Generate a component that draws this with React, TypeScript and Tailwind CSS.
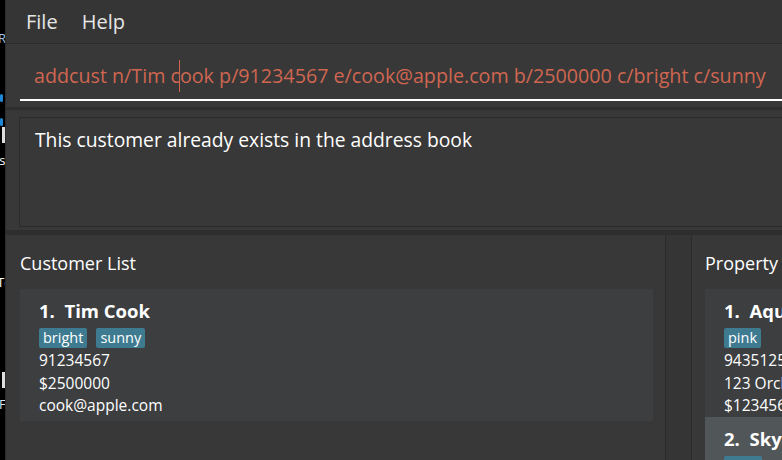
const font = { fontFamily: '"Open Sans", "Noto Sans", sans-serif' }

const Tag = ({ label }: { label: string }) => (
  <span className="rounded-[2px] bg-[#3e7b91] px-[4px] text-[14.5px] leading-[20px] text-white">{label}</span>
)

export default function App() {
  return (
    <div className="relative flex h-[460px] w-[782px] overflow-hidden bg-black" style={font}>
      {/* bit of another window peeking out on the left */}
      <div className="relative w-[5px] shrink-0 overflow-hidden bg-black text-[13px] leading-[16px] text-white">
        <span className="absolute left-[-2px] top-[30px] text-[#9ec3e6]">R</span>
        <span className="absolute left-[0px] top-[94px] h-[8px] w-[3px] rounded-full bg-[#1e88d8]" />
        <span className="absolute left-[0px] top-[118px] h-[8px] w-[3px] rounded-full bg-[#1e88d8]" />
        <span className="absolute left-[2px] top-[127px] h-[16px] w-[3px] bg-[#ddd]" />
        <span className="absolute left-[-4px] top-[152px]">is</span>
        <span className="absolute left-[-3px] top-[274px]">Te</span>
        <span className="absolute left-[2px] top-[372px] h-[16px] w-[3px] bg-[#ddd]" />
        <span className="absolute left-[-1px] top-[396px] text-[#cfe3f5]">F</span>
      </div>
      <div className="flex min-w-0 flex-1 flex-col border-l border-[#2b2b2b] bg-[#383838]">
        {/* menu bar */}
        <div className="flex h-[44px] shrink-0 items-center gap-[24px] border-b border-[#2b2b2b] bg-[#353535] pl-[20px] text-[20px] text-[#e6e6e6]">
          <span>File</span>
          <span>Help</span>
        </div>
        {/* command box */}
        <div className="h-[66px] shrink-0 border-b-[3px] border-[#2e2e2e] pl-[14px] pt-[8px]">
          <div className="flex h-[49px] items-center border-b-2 border-white pl-[14px] text-[19.7px] whitespace-pre text-[#d06651]">
            <span>addcust n/Tim c</span>
            <span className="-ml-[1px] inline-block h-[32px] w-[1px] bg-[#d06651]" />
            <span>ook p/91234567 e/cook@apple.com b/2500000 c/bright c/sunny</span>
          </div>
        </div>
        {/* result display */}
        <div className="h-[125px] shrink-0 border-b-[5px] border-[#2e2e2e] pl-[13px] pt-[7px] pb-[3px]">
          <div className="h-full border border-r-0 border-[#2b2b2b] pl-[15px] pt-[8px] text-[19.3px] text-white">
            This customer already exists in the address book
          </div>
        </div>
        {/* lists */}
        <div className="flex min-h-0 flex-1">
          <div className="flex w-[660px] shrink-0 flex-col border-r border-[#2b2b2b] pl-[14px] pr-[12px]">
            <div className="pt-[15px] pb-[13px] text-[18px] leading-[26px] text-white">Customer List</div>
            <div className="flex h-[132px] flex-col bg-[#3c3e3f] pl-[19px] pt-[10px] text-[15.5px] leading-[22.5px] text-white">
              <div className="text-[18.5px] leading-[24px] font-bold">1.&nbsp; Tim Cook</div>
              <div className="mt-[5px] flex gap-[9px]">
                <Tag label="bright" />
                <Tag label="sunny" />
              </div>
              <div className="mt-[1px]">91234567</div>
              <div>$2500000</div>
              <div>cook@apple.com</div>
            </div>
          </div>
          <div className="w-[26px] shrink-0 border-r border-[#2b2b2b] bg-[#353535]" />
          <div className="flex min-w-0 flex-1 flex-col pl-[13px]">
            <div className="pt-[15px] pb-[13px] text-[18px] leading-[26px] whitespace-nowrap text-white">Property List</div>
            <div className="flex h-[132px] flex-col whitespace-nowrap bg-[#3c3e3f] pl-[19px] pt-[10px] text-[15.5px] leading-[22.5px] text-white">
              <div className="text-[18.5px] leading-[24px] font-bold">1.&nbsp; Aqua Vista</div>
              <div className="mt-[5px] flex gap-[9px]">
                <Tag label="pink" />
              </div>
              <div className="mt-[1px]">94351253</div>
              <div>123 Orchard Road</div>
              <div>$1234567</div>
            </div>
            <div className="flex flex-1 flex-col whitespace-nowrap bg-[#515658] pl-[19px] pt-[10px] text-white">
              <div className="text-[18.5px] leading-[24px] font-bold">2.&nbsp; Skyline</div>
              <div className="mt-[5px] flex gap-[9px]">
                <Tag label="blue" />
              </div>
            </div>
          </div>
        </div>
      </div>
    </div>
  )
}
